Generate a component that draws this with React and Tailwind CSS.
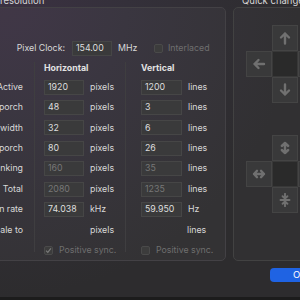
import React from "react";

const T = "text-[8.8px]";

const Input = ({ value, dim, w = "w-[40px]" }) => (
  <div
    className={`${w} h-[15px] shrink-0 bg-[#3a3a3b] border border-[#464646] flex items-center pl-[3px] text-[8.8px] leading-none ${dim ? "text-[#777777]" : "text-[#dedede]"}`}
  >
    {value}
  </div>
);

const Unit = ({ children }) => (
  <span className="ml-[6px] text-[8.8px] leading-none text-[#d8d8d8]">{children}</span>
);

const Row = ({ children, className = "" }) => (
  <div className={`h-[20.4px] shrink-0 flex items-center ${className}`}>{children}</div>
);

const Check = ({ checked }) => (
  <div className="w-[9px] h-[9px] rounded-[2px] bg-[#3c3c3c] border border-[#4a4a4a] flex items-center justify-center shrink-0">
    {checked && (
      <svg width="7" height="7" viewBox="0 0 8 8">
        <path d="M1.2 4.2 L3.2 6.2 L6.8 1.5" stroke="#7a7a7a" strokeWidth="1.4" fill="none" />
      </svg>
    )}
  </div>
);

const labels = ["Active", "porch", "width", "porch", "anking", "Total", "an rate", "cale to"];
const H = [
  ["1920", "pixels"],
  ["48", "pixels"],
  ["32", "pixels"],
  ["80", "pixels"],
  ["160", "pixels", true],
  ["2080", "pixels", true],
  ["74.038", "kHz"],
];
const V = [
  ["1200", "lines"],
  ["3", "lines"],
  ["6", "lines"],
  ["26", "lines"],
  ["35", "lines", true],
  ["1235", "lines", true],
  ["59.950", "Hz"],
];

const stroke = "#707070";

const Icon = ({ kind }) => {
  const common = {
    stroke,
    strokeWidth: kind === "vin" ? 1.9 : 2.4,
    fill: "none",
    strokeLinecap: "round",
    strokeLinejoin: "round",
  };
  let d = "";
  if (kind === "up") d = "M7 12.5 V2.5 M3 6.5 L7 2.5 L11 6.5";
  if (kind === "down") d = "M7 1.5 V11.5 M3 7.5 L7 11.5 L11 7.5";
  if (kind === "left") d = "M12 7 H2.5 M6.5 3 L2.5 7 L6.5 11";
  if (kind === "vud") d = "M7 2 V12 M3.8 5 L7 2 L10.2 5 M3.8 9 L7 12 L10.2 9";
  if (kind === "hlr") d = "M2 7 H12 M5 3.8 L2 7 L5 10.2 M9 3.8 L12 7 L9 10.2";
  if (kind === "vin") d = "M7 0.8 V5.3 M4.6 3.2 L7 5.5 L9.4 3.2 M2.5 7 H11.5 M7 13.2 V8.7 M4.6 10.8 L7 8.5 L9.4 10.8";
  return (
    <svg width="14" height="14" viewBox="0 0 14 14">
      <path d={d} {...common} />
    </svg>
  );
};

const Btn = ({ kind }) => (
  <div className="w-[26px] h-[26px] bg-[#39393a] border border-[#444444] flex items-center justify-center">
    <Icon kind={kind} />
  </div>
);
const Center = () => <div className="w-[26px] h-[26px] bg-[#2a2a2a] border border-[#383838]" />;
const Empty = () => <div className="w-[26px] h-[26px]" />;

export default function App() {
  return (
    <div
      className="w-[300px] h-[300px] overflow-hidden flex flex-col bg-[#2c2b2d] bg-[radial-gradient(ellipse_at_top_left,#3b3142_0%,#34303a_30%,#2d2c2e_70%)]"
      style={{ fontFamily: "Inter, 'Noto Sans', sans-serif" }}
    >
      {/* titles */}
      <div className="h-[12px] -mt-[5px] flex text-[9.5px] leading-[12px] text-[#d6d6d6] shrink-0 whitespace-nowrap">
        <span className="ml-[0px] w-[242px] shrink-0">resolution</span>
        <span>Quick change</span>
      </div>

      <div className="flex shrink-0">
        {/* left box */}
        <div className="ml-[-20px] w-[246px] h-[254px] shrink-0 rounded-[5px] border border-[#434145] bg-[#ffffff08] flex flex-col">
          <div className="mt-[32px] h-[16px] flex items-center shrink-0">
            <span className={`w-[84px] text-right ${T} leading-none text-[#d8d8d8]`}>Pixel Clock:</span>
            <div className="ml-[7px]">
              <Input value="154.00" />
            </div>
            <span className={`ml-[6px] w-[36px] ${T} leading-none text-[#d8d8d8]`}>MHz</span>
            <Check />
            <span className={`ml-[5px] ${T} leading-none text-[#6f6f6f]`}>Interlaced</span>
          </div>

          <div className="mt-[6px] flex">
            {/* labels */}
            <div className="w-[53px] pr-[11px] flex flex-col items-end h-[190px] shrink-0">
              <div className="h-[15px] shrink-0" />
              {labels.map((l, i) => (
                <Row key={i} className="justify-end">
                  <span className={`${T} leading-none text-[#d8d8d8] whitespace-nowrap`}>{l}</span>
                </Row>
              ))}
            </div>
            {/* horizontal */}
            <div className="w-[91px] border-l border-[#3f3e40] pl-[9px] flex flex-col h-[190px] shrink-0">
              <div className={`h-[15px] shrink-0 pt-[1px] ${T} font-bold leading-[10px] text-[#e2e2e2]`}>Horizontal</div>
              {H.map(([v, u, d], i) => (
                <Row key={i}>
                  <Input value={v} dim={d} />
                  <Unit>{u}</Unit>
                </Row>
              ))}
              <Row>
                <span className={`ml-[46px] ${T} leading-none text-[#d8d8d8]`}>pixels</span>
              </Row>
              <Row>
                <Check checked />
                <span className={`ml-[6px] ${T} leading-none text-[#6f6f6f] whitespace-nowrap`}>Positive sync.</span>
              </Row>
            </div>
            {/* vertical */}
            <div className="w-[101px] border-l border-[#3f3e40] pl-[15px] flex flex-col h-[190px] shrink-0">
              <div className={`h-[15px] shrink-0 pt-[1px] ${T} font-bold leading-[10px] text-[#e2e2e2]`}>Vertical</div>
              {V.map(([v, u, d], i) => (
                <Row key={i}>
                  <Input value={v} dim={d} w="w-[41px]" />
                  <Unit>{u}</Unit>
                </Row>
              ))}
              <Row>
                <span className={`ml-[46px] ${T} leading-none text-[#d8d8d8]`}>lines</span>
              </Row>
              <Row>
                <Check />
                <span className={`ml-[6px] ${T} leading-none text-[#6f6f6f] whitespace-nowrap`}>Positive sync.</span>
              </Row>
            </div>
          </div>
        </div>

        {/* right box */}
        <div className="ml-[7px] w-[90px] h-[254px] shrink-0 rounded-[5px] border border-[#424242] bg-[#ffffff06] pl-[12px] pt-[17px] flex flex-col">
          <div className="grid grid-cols-[26px_26px_26px] w-[78px]">
            <Empty />
            <Btn kind="up" />
            <Empty />
            <Btn kind="left" />
            <Center />
            <Btn kind="left" />
            <Empty />
            <Btn kind="down" />
            <Empty />
          </div>
          <div className="mt-[32px] grid grid-cols-[26px_26px_26px] w-[78px]">
            <Empty />
            <Btn kind="vud" />
            <Empty />
            <Btn kind="hlr" />
            <Center />
            <Btn kind="hlr" />
            <Empty />
            <Btn kind="vin" />
            <Empty />
          </div>
        </div>
      </div>

      {/* bottom */}
      <div className="flex-1 flex items-start justify-start pt-[7px]">
        <div className="ml-[270px] w-[60px] h-[14px] shrink-0 rounded-[4px] bg-[#1f63e3] flex items-center pl-[23px] text-[9.5px] leading-none text-white">
          OK
        </div>
      </div>
      <div className="h-[3px] bg-[#1c1c1c] shrink-0" />
    </div>
  );
}
